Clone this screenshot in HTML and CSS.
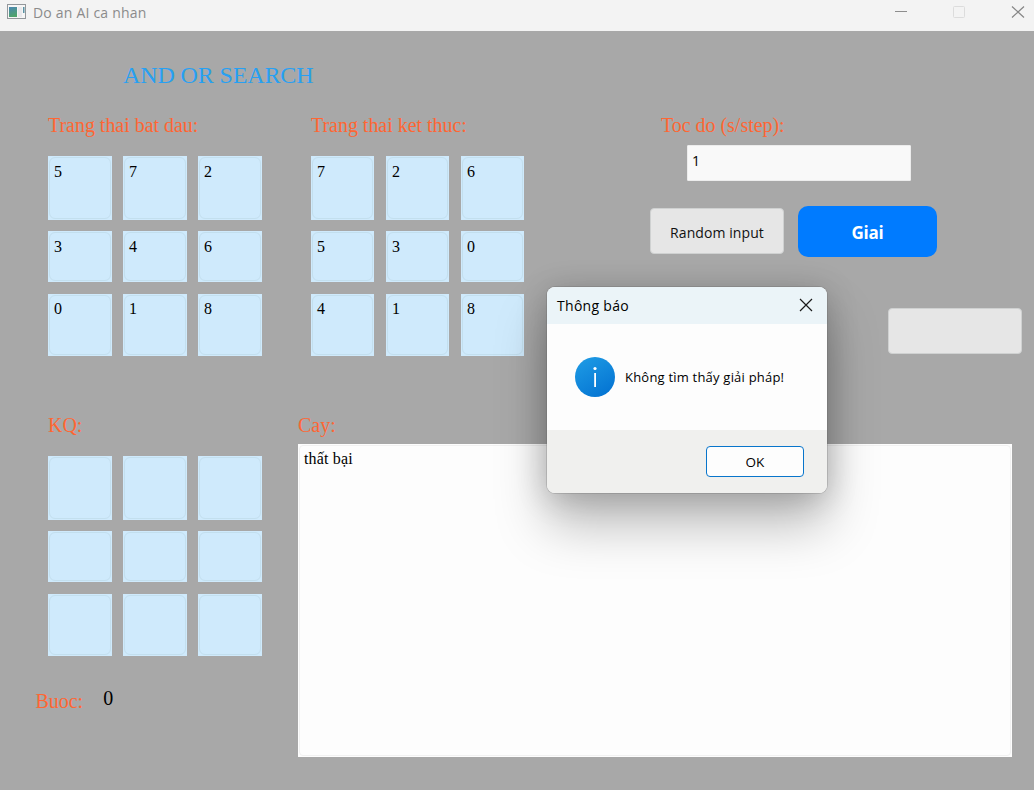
FILE: index.html
```html
<!DOCTYPE html>
<html lang="vi">
<head>
<meta charset="utf-8">
<title>Do an AI ca nhan</title>
<link rel="stylesheet" href="styles.css">
</head>
<body>
<header class="titlebar">
  <svg class="app-icon" width="20" height="16" viewBox="0 0 20 16">
    <defs><linearGradient id="appg" x1="0" y1="0" x2="0.3" y2="1"><stop offset="0" stop-color="#4a86b4"/><stop offset="1" stop-color="#4fa36c"/></linearGradient></defs>
    <rect x="0.5" y="0.5" width="18" height="14" fill="#f6f6f6" stroke="#93979b"/>
    <rect x="2" y="3" width="8" height="10" fill="url(#appg)"/>
    <rect x="11" y="3" width="4" height="10" fill="#e9e9ec"/>
    <rect x="16" y="3" width="1.5" height="6" fill="#5b93a5"/>
  </svg>
  <span class="app-title">Do an AI ca nhan</span>
  <svg class="controls" width="132" height="14" viewBox="0 0 132 14" fill="none">
    <path d="M0 6.5H12" stroke="#8d8d8d"/>
    <rect x="58.500" y="1.500" width="11" height="11" rx="1" stroke="#dcdcdc"/>
    <path d="M117 1.500L129 12.500M129 1.500L117 12.500" stroke="#858585" stroke-width="1.200"/>
  </svg>
</header>
<main class="main">
  <h1 class="heading">AND OR SEARCH</h1>
  <section class="top">
    <div class="start">
      <h2 class="label">Trang thai bat dau:</h2>
      <div class="board">
        <div class="cell">5</div><div class="cell">7</div><div class="cell">2</div>
        <div class="cell">3</div><div class="cell">4</div><div class="cell">6</div>
        <div class="cell">0</div><div class="cell">1</div><div class="cell">8</div>
      </div>
    </div>
    <div class="goal">
      <h2 class="label label-goal">Trang thai ket thuc:</h2>
      <div class="board board-goal">
        <div class="cell">7</div><div class="cell">2</div><div class="cell">6</div>
        <div class="cell">5</div><div class="cell">3</div><div class="cell">0</div>
        <div class="cell">4</div><div class="cell">1</div><div class="cell">8</div>
      </div>
    </div>
    <div class="settings">
      <h2 class="label label-speed">Toc do (s/step):</h2>
      <div class="speed">1</div>
      <div class="actions">
        <button class="btn"><span class="btn-text">Random input</span></button>
        <button class="solve"><span class="solve-text">Giai</span></button>
      </div>
      <button class="btn btn-empty" aria-label="empty"></button>
    </div>
  </section>
  <section class="bottom">
    <div class="result">
      <h2 class="label label-kq">KQ:</h2>
      <div class="board board-result">
        <div class="cell"></div><div class="cell"></div><div class="cell"></div>
        <div class="cell"></div><div class="cell"></div><div class="cell"></div>
        <div class="cell"></div><div class="cell"></div><div class="cell"></div>
      </div>
      <div class="steps"><span class="label label-steps">Buoc:</span><span class="count">0</span></div>
    </div>
    <div class="tree">
      <h2 class="label label-tree">Cay:</h2>
      <div class="log"><span class="log-text">thất bại</span></div>
    </div>
  </section>
</main>
<div class="dialog" role="dialog">
  <div class="dialog-head">
    <span class="dialog-title">Thông báo</span>
    <svg class="dialog-close" width="14" height="14" viewBox="0 0 14 14"><path d="M1 1L13 13M13 1L1 13" stroke="#1a1a1a" stroke-width="1.200" fill="none"/></svg>
  </div>
  <div class="dialog-body">
    <svg width="40" height="40" viewBox="0 0 40 40">
      <defs><linearGradient id="info" x1="0.200" y1="0" x2="0.800" y2="1"><stop offset="0" stop-color="#1d9ae4"/><stop offset="1" stop-color="#0473d2"/></linearGradient></defs>
      <circle cx="20" cy="20" r="20" fill="url(#info)"/>
      <circle cx="20" cy="11.500" r="1.600" fill="#fff"/>
      <rect x="19.200" y="16" width="1.800" height="14" fill="#fff"/>
    </svg>
    <span class="message">Không tìm thấy giải pháp!</span>
  </div>
  <div class="dialog-foot"><button class="ok"><span class="ok-text">OK</span></button></div>
</div>
</body>
</html>
```

FILE: styles.css
```css
* { box-sizing: border-box; }
body {
  margin: 0;
  width: 1034px;
  height: 790px;
  overflow: hidden;
  display: flex;
  flex-direction: column;
  background: #a8a8a8;
  font-family: "Open Sans", "Noto Sans", sans-serif;
  color: #000;
}
button { font-family: inherit; padding: 0; }
svg { display: block; flex: none; }
.titlebar {
  height: 31px;
  flex: none;
  display: flex;
  align-items: flex-start;
  padding: 4px 4px 0 7px;
  background: #f3f3f3;
}
.app-title {
  margin: -1px auto 0 6px;
  font-size: 14px;
  letter-spacing: 0.2px;
  line-height: 20px;
  color: #8b8b8b;
}
.controls { margin: 1px 3px 0 0; }
.main { flex: 1; font-family: "Liberation Serif", serif; }
.heading {
  margin: 30px 0 0 123px;
  font-size: 24px;
  font-weight: 400;
  letter-spacing: -0.12px;
  line-height: 28px;
  color: #27a0f2;
}
.label {
  margin: 0;
  font-size: 20px;
  font-weight: 400;
  letter-spacing: -0.03px;
  line-height: 24px;
  color: #ff6633;
  white-space: nowrap;
}
.top {
  display: grid;
  grid-template-columns: 263px 339px 1fr;
  height: 300px;
  margin-top: 24px;
  padding-left: 48px;
}
.board {
  display: grid;
  grid-template-columns: repeat(3, 64px);
  grid-template-rows: 64px 62px 74px;
  column-gap: 11px;
  margin-top: 19px;
}
.board .cell:nth-child(n+4) { margin-top: 11px; }
.board .cell:nth-child(n+7) { margin-top: 12px; padding-top: 5px; }
.board-goal { grid-template-columns: repeat(3, 63px); column-gap: 12px; }
.cell {
  position: relative;
  padding: 6px;
  font-size: 16px;
  line-height: 20px;
  background: #cfeafc;
}
.cell::after {
  content: "";
  position: absolute;
  inset: 1px;
  border: 1px solid #c3dfee;
  border-radius: 6px;
}
.settings { display: flex; flex-direction: column; align-items: flex-start; }
.label-speed { margin-left: 11px; }
.speed {
  width: 224px;
  height: 36px;
  margin: 8px 0 0 37px;
  padding: 0 4px;
  border: 1px solid #ececec;
  border-radius: 1px;
  background: #f9f9f9;
  font: 14px/30px "Open Sans", sans-serif;
}
.actions { display: flex; align-items: flex-start; gap: 14px; margin-top: 25px; }
.btn {
  width: 134px;
  height: 46px;
  margin-top: 2px;
  padding-top: 2px;
  border: 1px solid #cfd1d1;
  border-radius: 4px;
  background: #e6e6e6;
  font-family: "Open Sans", sans-serif;
  font-size: 14px;
  letter-spacing: 0.08px;
  color: #111;
}
.solve {
  width: 139px;
  height: 51px;
  padding-top: 2px;
  border: 0;
  border-radius: 10px;
  background: #007bff;
  color: #fff;
  font: 700 17px/24px "Open Sans", sans-serif;
  letter-spacing: -0.2px;
}
.btn-empty { margin: 51px 0 0 238px; }
.bottom { display: grid; grid-template-columns: 298px 714px; }
.label-kq, .board-result { margin-left: 48px; }
.steps { display: flex; gap: 20px; margin: 33px 0 0 35.5px; }
.count { font-size: 20px; line-height: 24px; margin-top: -3px; }
.log {
  position: relative;
  height: 313px;
  margin-top: 7px;
  padding: 5px 6px;
  background: #fdfdfd;
  font-size: 16px;
  letter-spacing: 0.15px;
  line-height: 20px;
}
.log::after {
  content: "";
  position: absolute;
  inset: 1px;
  border: 1px solid #f1f1f1;
  border-radius: 4px;
}
.dialog {
  position: absolute;
  left: 547px;
  top: 287px;
  width: 280px;
  height: 206px;
  overflow: hidden;
  display: flex;
  flex-direction: column;
  border-radius: 8px;
  background: #fdfdfd;
  box-shadow: 0 0 0 1px rgba(80, 80, 80, .2), 0 32px 52px rgba(0, 0, 0, .26), 0 4px 32px rgba(0, 0, 0, .2);
}
.dialog-head {
  height: 37px;
  display: flex;
  align-items: center;
  justify-content: space-between;
  padding: 0 14px 0 10px;
  background: #ebf4f8;
  font-size: 14px;
  letter-spacing: 0.3px;
}
.dialog-close { margin-top: -1px; }
.dialog-body {
  flex: 1;
  display: flex;
  align-items: center;
  gap: 10px;
  padding-left: 28px;
  font-size: 13px;
}
.message { white-space: nowrap; letter-spacing: 0.21px; }
.dialog-foot {
  height: 63px;
  padding: 16px 23px 0 0;
  display: flex;
  justify-content: flex-end;
  background: #f0f0ee;
}
.ok {
  width: 98px;
  height: 31px;
  border: 1px solid #0875cb;
  border-radius: 4px;
  background: #fdfdfd;
  font-size: 13.5px;
  color: #000;
}
```
